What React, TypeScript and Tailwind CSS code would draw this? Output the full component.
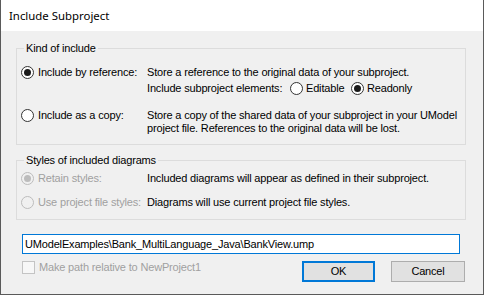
import React from "react";

function Radio({ checked = false, disabled = false }: { checked?: boolean; disabled?: boolean }) {
  const stroke = disabled ? "#bcbcbc" : "#333333";
  const fill = disabled ? "#f0f0f0" : "#ffffff";
  const dot = disabled ? "#bcbcbc" : "#1a1a1a";
  return (
    <svg width="13" height="13" viewBox="0 0 13 13" className="shrink-0">
      <circle cx="6.5" cy="6.5" r="6" fill={fill} stroke={stroke} strokeWidth="1" />
      {checked && <circle cx="6.5" cy="6.5" r="3.5" fill={dot} />}
    </svg>
  );
}

export default function App() {
  const font = { fontFamily: '"Liberation Sans", Arial, sans-serif', letterSpacing: "-0.17px" };
  return (
    <div
      className="w-[484px] h-[295px] bg-white border-l border-r border-b border-[#5a5a5a] flex flex-col text-[11px] text-black whitespace-nowrap"
      style={font}
    >
      <div
        className="h-[31px] shrink-0 flex items-center pl-[8px] text-[11.4px] text-[#000]"
        style={{ fontFamily: '"Noto Sans", "Open Sans", sans-serif', letterSpacing: "0px" }}
      >
        Include Subproject
      </div>
      <div className="flex-1 bg-[#f0f0f0] flex flex-col pl-[15px] pt-[17px]">
        {/* Group 1 */}
        <div className="relative w-[450px] h-[97px] border border-[#dcdcdc] pl-[4px] pt-[15px]">
          <div className="absolute left-[7px] top-[-8px] px-[2px] bg-[#f0f0f0] leading-[14px]">Kind of include</div>
          <div className="grid grid-cols-[126px_1fr]">
            <div className="h-[16px] flex items-center gap-[4px]">
              <Radio checked />
              <span>Include by reference:</span>
            </div>
            <div className="h-[16px] flex items-center">Store a reference to the original data of your subproject.</div>
            <div className="h-[16px]" />
            <div className="h-[16px] flex items-center">
              <span className="w-[143px]">Include subproject elements:</span>
              <div className="w-[61px] flex items-center gap-[3px]">
                <Radio />
                <span>Editable</span>
              </div>
              <div className="flex items-center gap-[3px]">
                <Radio checked />
                <span>Readonly</span>
              </div>
            </div>
            <div className="mt-[13px] h-[13px] flex items-center gap-[4px]">
              <Radio />
              <span>Include as a copy:</span>
            </div>
            <div className="mt-[13px] leading-[13px]">
              Store a copy of the shared data of your subproject in your UModel
              <br />
              project file. References to the original data will be lost.
            </div>
          </div>
        </div>

        {/* Group 2 */}
        <div className="relative mt-[15px] w-[450px] h-[60px] border border-[#dcdcdc] pl-[4px] pt-[9px]">
          <div className="absolute left-[7px] top-[-8px] px-[2px] bg-[#f0f0f0] leading-[14px]">Styles of included diagrams</div>
          <div className="grid grid-cols-[126px_1fr] gap-y-[8px]">
            <div className="h-[16px] flex items-center gap-[4px] text-[#a0a0a0]">
              <Radio checked disabled />
              <span>Retain styles:</span>
            </div>
            <div className="h-[16px] flex items-center">Included diagrams will appear as defined in their subproject.</div>
            <div className="h-[16px] flex items-center gap-[4px] text-[#a0a0a0]">
              <Radio disabled />
              <span>Use project file styles:</span>
            </div>
            <div className="h-[16px] flex items-center">Diagrams will use current project file styles.</div>
          </div>
        </div>

        {/* Path field */}
        <div className="mt-[14px] ml-[6px] w-[438px] h-[20px] border border-[#0078d7] bg-white flex items-center pl-[2px]">
          UModelExamples\Bank_MultiLanguage_Java\BankView.ump
        </div>

        {/* Bottom row */}
        <div className="mt-[7px] ml-[6px] flex items-start">
          <div className="flex items-center gap-[4px] h-[13px] text-[#a0a0a0]">
            <div className="w-[13px] h-[13px] border border-[#c4c4c4] bg-[#f7f7f7]" />
            <span>Make path relative to NewProject1</span>
          </div>
          <div className="ml-auto mr-[18px] flex gap-[16px]">
            <button className="w-[73px] h-[21px] border-2 border-[#0078d7] bg-[#e1e1e1] text-[11px] flex items-center justify-center">
              OK
            </button>
            <button className="w-[74px] h-[21px] border border-[#adadad] bg-[#e1e1e1] text-[11px] flex items-center justify-center">
              Cancel
            </button>
          </div>
        </div>
      </div>
    </div>
  );
}
